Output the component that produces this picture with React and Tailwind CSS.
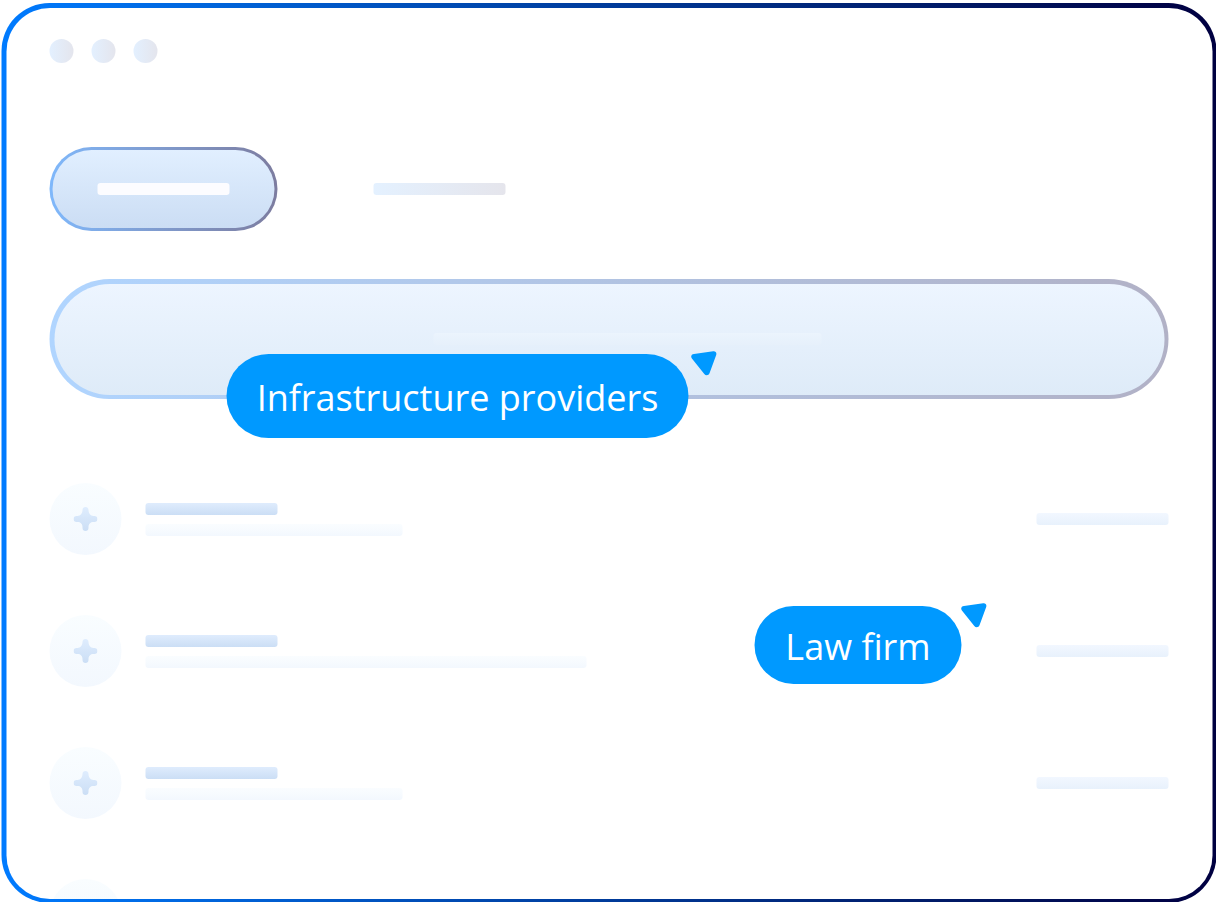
import React from "react";

const rows = [
  { id: 1, detail: "w-[257px]" },
  { id: 2, detail: "w-[441px]" },
  { id: 3, detail: "w-[257px]" },
  { id: 4, detail: "w-[441px]" },
];

function Sparkle() {
  return (
    <svg width="24" height="24" viewBox="0 0 24 24" aria-hidden="true">
      <defs>
        <linearGradient id="sparkle" x1="0" y1="0" x2="0" y2="1">
          <stop stopColor="#dfedfe" />
          <stop offset="1" stopColor="#cbdef5" />
        </linearGradient>
      </defs>
      <path
        fill="url(#sparkle)"
        d="M12 0C13.7 0 15 1.3 15 3C15 6 17 9 20 9H21C22.7 9 24 10.3 24 12C24 13.7 22.7 15 21 15H20C17 15 15 17 15 20V21C15 22.7 13.7 24 12 24C10.3 24 9 22.7 9 21V20C9 17 7 15 4 15H3C1.3 15 0 13.7 0 12C0 10.3 1.3 9 3 9H4C7 9 9 6 9 3C9 1.3 10.3 0 12 0Z"
      />
    </svg>
  );
}

function Row({ detail }) {
  return (
    <div className="flex h-[72px] shrink-0 items-center">
      <div className="flex size-[72px] items-center justify-center rounded-full bg-linear-to-b from-[#f9fdff] to-[#f3f8fe]">
        <Sparkle />
      </div>
      <div className="ml-6 flex flex-col gap-[9px]">
        <div className="h-3 w-[132px] rounded-[3px] bg-linear-to-b from-[#dfecfd] to-[#cbdef5]" />
        <div className={`h-3 rounded-[3px] bg-linear-to-b from-[#fafdff] to-[#f3f8fe] ${detail}`} />
      </div>
      <div className="ml-auto h-3 w-[132px] rounded-[3px] bg-linear-to-b from-[#f2f7ff] to-[#e8f1fc]" />
    </div>
  );
}

function Pointer({ className }) {
  return (
    <svg className={className} width="26" height="25" viewBox="0 0 26 25" aria-hidden="true">
      <path
        fill="#0099ff"
        d="M3 2.9L22.2 .3C24.6 0 25.9 1.7 25.2 4L18.6 22C17.7 24.5 14.8 25 13.3 23L.9 7.4C-.6 5.3 .4 3.2 3 2.9Z"
      />
    </svg>
  );
}

export default function App() {
  return (
    <div className="relative h-[902px] w-[1216px] overflow-hidden bg-white pl-[2px] pt-[3px] font-['Open_Sans','Noto_Sans',sans-serif]">
      <div className="h-[900px] w-[1215px] -translate-x-[0.5px] rounded-[48px] bg-linear-to-r from-[#007bff] to-[#000040] p-[4.5px]">
        <div className="flex h-full flex-col overflow-hidden rounded-[43.5px] bg-white px-[43.5px] pt-[31.5px]">
          <div className="flex shrink-0 gap-[18px]">
            {[0, 1, 2].map((dot) => (
              <div key={dot} className="size-6 rounded-full bg-linear-to-r from-[#e3f0ff] to-[#e4e5ed]" />
            ))}
          </div>

          <div className="mt-[84px] flex shrink-0 items-center gap-24">
            <div className="h-[84px] w-[228px] rounded-full bg-linear-to-r from-[#7fb8fb] to-[#7c7c9f] p-[3px]">
              <div className="flex h-full items-center justify-center rounded-full bg-linear-to-b from-[#e1efff] to-[#cbddf4]">
                <div className="h-3 w-[132px] rounded-[3px] bg-[#fcfcff]" />
              </div>
            </div>
            <div className="h-3 w-[132px] rounded-[3px] bg-linear-to-r from-[#e4f1ff] to-[#e5e5ec]" />
          </div>

          <div className="mt-12 h-[120px] shrink-0 rounded-full bg-linear-to-r from-[#b0d5ff] to-[#b1b1c6] p-[4.5px]">
            <div className="flex h-full items-center justify-center rounded-full bg-linear-to-b from-[#edf5ff] to-[#deebf8]">
              <div className="mr-[-37px] h-3 w-[388px] rounded-[3px] bg-linear-to-b from-[#ebf4fd] to-[#e6f0fb]" />
            </div>
          </div>

          <div className="mt-[84px] flex flex-col gap-[60px]">
            {rows.map((row) => (
              <Row key={row.id} detail={row.detail} />
            ))}
          </div>
        </div>
      </div>

      <div className="absolute left-[227px] top-[354px] flex h-[84px] w-[462px] -translate-x-[0.5px] items-center justify-center rounded-[42px] bg-[#0099ff] pt-1 text-[36px] leading-none text-white">
        <span className="whitespace-nowrap">Infrastructure providers</span>
      </div>
      <Pointer className="absolute left-[691px] top-[351px]" />

      <div className="absolute left-[755px] top-[606px] flex h-[78px] w-[207px] -translate-x-[0.5px] items-center justify-center rounded-[39px] bg-[#0099ff] pt-1 text-[36px] leading-none text-white">
        <span className="whitespace-nowrap">Law firm</span>
      </div>
      <Pointer className="absolute left-[961px] top-[603px]" />
    </div>
  );
}
